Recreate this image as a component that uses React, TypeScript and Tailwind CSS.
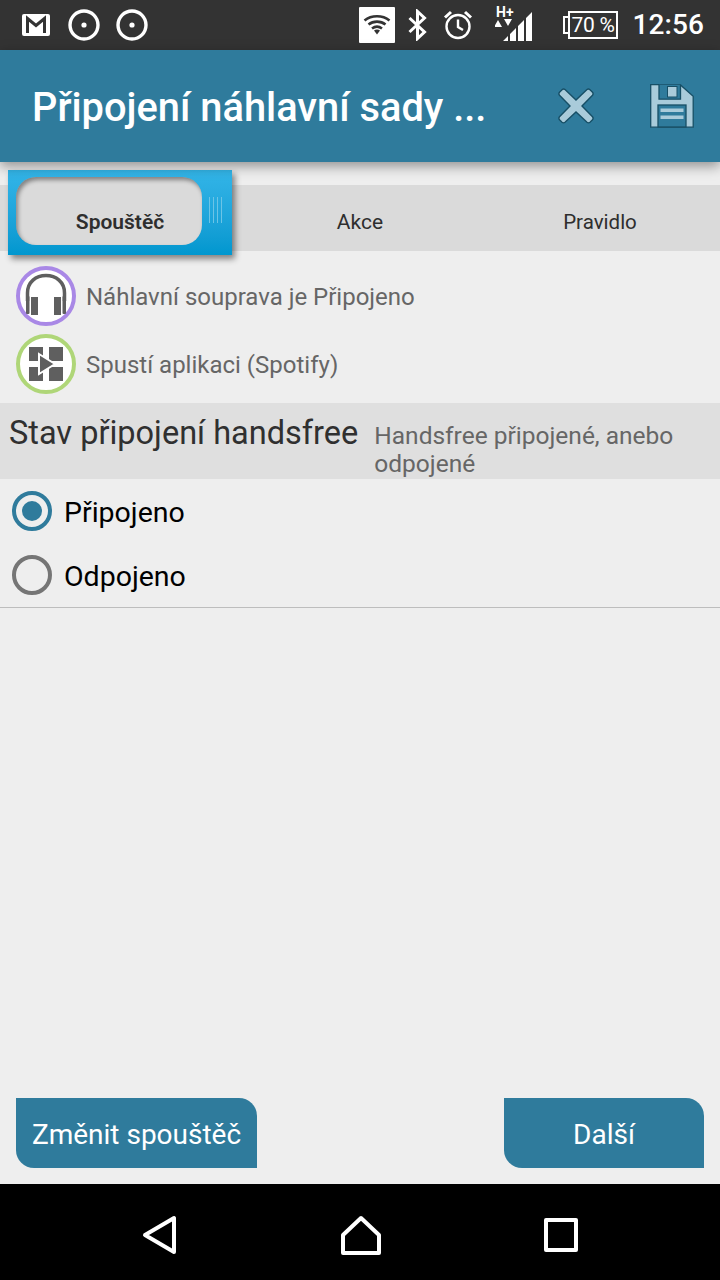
const roboto = 'font-["Roboto",sans-serif]';

function StatusBar() {
  return (
    <div className="flex h-[50px] items-center bg-[#333333] pl-[22px] pr-[16px] text-white">
      <svg width="28" height="24" viewBox="0 0 28 24">
        <rect x="0" y="1" width="28" height="22" rx="2" fill="#fff" />
        <path d="M5.500 20V5.500L14 12.500l8.500-7V20" fill="none" stroke="#333" strokeWidth="3" />
      </svg>
      <svg width="32" height="32" viewBox="0 0 32 32" className="ml-[18px]">
        <circle cx="16" cy="16" r="14" fill="none" stroke="#fff" strokeWidth="3.400" />
        <circle cx="16" cy="16" r="2.600" fill="#fff" />
      </svg>
      <svg width="32" height="32" viewBox="0 0 32 32" className="ml-[16px]">
        <circle cx="16" cy="16" r="14" fill="none" stroke="#fff" strokeWidth="3.400" />
        <circle cx="16" cy="16" r="2.600" fill="#fff" />
      </svg>
      <div className="ml-[211px] flex h-[36px] w-[36px] items-center justify-center rounded-[1px] bg-white">
        <svg width="28" height="22" viewBox="0 0 28 22" fill="none" stroke="#333" strokeWidth="2.600">
          <path d="M1.500 6.500c7-5.600 18-5.600 25 0" />
          <path d="M5.500 10.500c4.800-3.800 12.200-3.800 17 0" />
          <path d="M9 14.500c3-2.300 7-2.300 10 0" />
          <path d="M11 16.500l3 4 3-4c-1.800-1.200-4.200-1.200-6 0z" fill="#333" stroke="none" />
        </svg>
      </div>
      <svg width="20" height="32" viewBox="0 0 20 32" fill="none" stroke="#fff" strokeWidth="3" className="ml-[13px]">
        <path d="M1.500 9l15 14-7 6.500V2.500l7 6.500-15 14" />
      </svg>
      <svg width="30" height="32" viewBox="0 0 30 32" fill="none" stroke="#fff" strokeWidth="2.400" className="ml-[15px]">
        <circle cx="15" cy="17.500" r="11.500" />
        <path d="M15 10.500v7.500l5 3" />
        <path d="M2 8.500l6-5.500M28 8.500l-6-5.500" strokeWidth="3" />
      </svg>
      <div className="relative ml-[22px] h-[34px] w-[38px]">
        <span className={`absolute left-[1px] top-[-3px] text-[14px] font-bold leading-[14px] ${roboto}`}>H+</span>
        <svg width="38" height="34" viewBox="0 0 38 34" fill="#fff">
          <path d="M-1 19l4-7 4 7zM9 11h8l-4 7z" />
          <path d="M8 33l5-5v5zM15 33v-7l6-6v13zM23 33V18l6-6v21zM31 33V10l6-6v29z" />
        </svg>
      </div>
      <div className="ml-[30px] flex h-[28px] w-[55px] items-center">
        <div className="h-[18px] w-[5px] border-y-2 border-l-2 border-white" />
        <div className={`flex h-[28px] flex-1 items-center justify-center border-2 border-white text-[21px] leading-none tracking-[-0.3px] ${roboto}`}>
          70 %
        </div>
      </div>
      <span className={`ml-auto text-[28px] font-medium leading-none tracking-[0.1px] ${roboto}`}>12:56</span>
    </div>
  );
}

function AppBar() {
  return (
    <div className="relative z-20 flex h-[112px] items-center bg-[#2f7b9c] pl-[32px] shadow-[0_4px_12px_rgba(0,0,0,0.4)]">
      <h1 className={`w-[501px] pt-[3px] text-[39.800px] font-medium leading-none whitespace-nowrap text-white ${roboto}`}>
        Připojení náhlavní sady ...
      </h1>
      <svg width="36" height="36" viewBox="0 0 36 36" className="ml-[25px]">
        <path
          d="M7 1.500L18 12 29 1.500c1-.8 2-.7 3 .2l2.500 2.500c.8 1 .8 2 0 3L24 18l10.500 10.800c.8 1 .8 2 0 3L32 34.300c-1 .8-2 .8-3 0L18 24 7 34.300c-1 .8-2 .8-3 0L1.500 31.800c-.8-1-.8-2 0-3L12 18 1.500 7.200c-.8-1-.8-2 0-3L4 1.700c1-.9 2-1 3-.2z"
          fill="#a9cbda"
          stroke="#174f66"
          strokeWidth="1.400"
        />
      </svg>
      <svg width="44" height="44" viewBox="0 0 44 44" className="ml-[56px]">
        <path d="M.7.700h29.500l13 11.500v31H.7z" fill="#a9cbda" stroke="#174f66" strokeWidth="1.300" />
        <path d="M9 .7v14.500h21.500V.7" fill="#2f7b9c" stroke="#174f66" strokeWidth="1.300" />
        <rect x="17.500" y="2.500" width="9.500" height="10.500" fill="#a9cbda" stroke="#174f66" />
        <rect x="8" y="21" width="28" height="22" fill="#2f7b9c" stroke="#174f66" strokeWidth="1.300" />
        <rect x="10.500" y="24.500" width="23" height="3.500" fill="#a9cbda" />
        <rect x="10.500" y="31.500" width="23" height="3.500" fill="#a9cbda" />
      </svg>
    </div>
  );
}

function Tabs() {
  return (
    <div className={`relative mt-[23px] grid h-[66px] grid-cols-3 bg-[#dadada] text-[20.500px] text-[#2e2e2e] ${roboto}`}>
      <div className="relative flex items-center justify-center pt-[9px] font-bold">
        {/* selected tab sits over the strip */}
        <div className="absolute left-[8px] top-[-15px] h-[85px] w-[224px] bg-gradient-to-b from-[#33b5e8] to-[#0097cf] shadow-[3px_4px_6px_rgba(0,0,0,0.45)]">
          <div className="absolute left-[8px] top-[7px] h-[68px] w-[186px] rounded-[20px] bg-[#dadada] shadow-[inset_2px_3px_4px_rgba(0,0,0,0.4)]" />
          <div className="absolute left-[201px] top-[27px] flex h-[26px] gap-[3px]">
            <div className="w-[1px] bg-[#6cc4e6]" />
            <div className="w-[1px] bg-[#6cc4e6]" />
            <div className="w-[1px] bg-[#6cc4e6]" />
            <div className="w-[1px] bg-[#6cc4e6]" />
          </div>
        </div>
        <span className="relative text-[21px] font-semibold">Spouštěč</span>
      </div>
      <div className="flex items-center justify-center pt-[10px] text-[21px]">Akce</div>
      <div className="flex items-center justify-center pt-[8px]">Pravidlo</div>
    </div>
  );
}

function SummaryRow({ ring, text, children }: { ring: string; text: string; children: React.ReactNode }) {
  return (
    <div className="flex h-[60px] items-center">
      <div className={`flex h-[60px] w-[60px] items-center justify-center rounded-full border-[4px] bg-white ${ring}`}>
        {children}
      </div>
      <span className={`ml-[10px] pt-[2px] text-[24px] text-[#666666] ${roboto}`}>{text}</span>
    </div>
  );
}

function RadioRow({ label, checked }: { label: string; checked?: boolean }) {
  return (
    <div className="flex h-[64px] items-center pl-[12px]">
      <div
        className={`flex h-[40px] w-[40px] items-center justify-center rounded-full border-[4px] ${
          checked ? "border-[#2f7b9c]" : "border-[#757575]"
        }`}
      >
        {checked && <div className="h-[20px] w-[20px] rounded-full bg-[#2f7b9c]" />}
      </div>
      <span className={`ml-[12px] pt-[4px] text-[28.500px] leading-none text-black ${roboto}`}>{label}</span>
    </div>
  );
}

function Nav() {
  return (
    <div className="flex h-[96px] items-center bg-black pl-[142px] pt-[5px]">
      <svg width="36" height="40" viewBox="0 0 36 40" fill="none" stroke="#fff" strokeWidth="4" strokeLinejoin="round">
        <path d="M32 3v34L3 20z" />
      </svg>
      <svg width="40" height="40" viewBox="0 0 40 40" fill="none" stroke="#fff" strokeWidth="4" strokeLinejoin="round" className="ml-[163px]">
        <path d="M20 3L38 20v18H2V20z" />
      </svg>
      <svg width="34" height="34" viewBox="0 0 34 34" fill="none" stroke="#fff" strokeWidth="4" strokeLinejoin="round" className="ml-[163px]">
        <rect x="2" y="2" width="30" height="30" />
      </svg>
    </div>
  );
}

export default function App() {
  return (
    <div className="flex h-[1280px] w-[720px] flex-col overflow-hidden bg-[#eeeeee]">
      <StatusBar />
      <AppBar />
      <Tabs />
      <div className="flex flex-col gap-[8px] pl-[16px] pt-[15px]">
        <SummaryRow ring="border-[#a988e6]" text="Náhlavní souprava je Připojeno">
          <svg width="46" height="46" viewBox="0 0 46 46">
            <path d="M4.500 28V20C4.500 9 13 2.500 23 2.500S41.500 9 41.500 20v8" fill="none" stroke="#5f5f5f" strokeWidth="3.500" />
            <rect x="3" y="23" width="3.500" height="18" rx="1" fill="#5f5f5f" />
            <rect x="8" y="24" width="7" height="18" fill="#5f5f5f" />
            <rect x="31" y="24" width="7" height="18" fill="#5f5f5f" />
            <rect x="39.500" y="23" width="3.500" height="18" rx="1" fill="#5f5f5f" />
          </svg>
        </SummaryRow>
        <SummaryRow ring="border-[#afd678]" text="Spustí aplikaci (Spotify)">
          <svg width="36" height="36" viewBox="0 0 36 36">
            <rect x="1" y="1" width="14" height="14" fill="#5f5f5f" />
            <rect x="21" y="1" width="14" height="14" fill="#5f5f5f" />
            <rect x="1" y="21" width="14" height="14" fill="#5f5f5f" />
            <rect x="21" y="21" width="14" height="14" fill="#5f5f5f" />
            <path d="M11 8l16 10-16 10z" fill="#5f5f5f" stroke="#fff" strokeWidth="2" />
          </svg>
        </SummaryRow>
      </div>
      <div className={`mt-[9px] flex h-[76px] items-start bg-[#dfdfdf] pl-[9px] pt-[12px] ${roboto}`}>
        <span className="whitespace-nowrap text-[32.500px] leading-[36px] text-[#303030]">Stav připojení handsfree</span>
        <span className="ml-[16px] pt-[7px] text-[24.500px] leading-[28px] text-[#666666]">
          Handsfree připojené, anebo odpojené
        </span>
      </div>
      <RadioRow label="Připojeno" checked />
      <RadioRow label="Odpojeno" />
      <div className="h-[1px] bg-[#bdbdbd]" />
      <div className="flex-1" />
      <div className={`flex justify-between px-[16px] pb-[16px] text-[28px] text-white ${roboto}`}>
        <div className="flex h-[70px] w-[241px] items-center justify-center rounded-tr-[18px] rounded-bl-[18px] bg-[#2f7b9c] pt-[3px] whitespace-nowrap">
          Změnit spouštěč
        </div>
        <div className="flex h-[70px] w-[200px] items-center justify-center rounded-tr-[18px] rounded-bl-[18px] bg-[#2f7b9c] pt-[3px]">
          Další
        </div>
      </div>
      <Nav />
    </div>
  );
}
